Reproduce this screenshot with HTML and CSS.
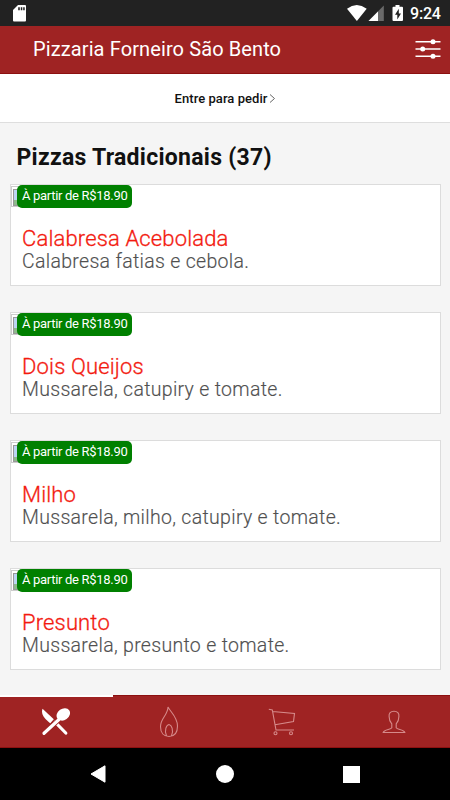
FILE: index.html
```html
<!DOCTYPE html>
<html lang="pt-BR">
<head>
<meta charset="utf-8">
<title>Pizzaria Forneiro São Bento</title>
<link rel="stylesheet" href="styles.css">
</head>
<body>
<div class="status">
  <svg class="sd" width="13" height="17" viewBox="0 0 13 17"><path d="M5 0h7a1 1 0 0 1 1 1v14.5a1 1 0 0 1-1 1H1a1 1 0 0 1-1-1V5z" fill="#fff"/><path d="M5.2 2.2h1.6v3H5.2zM7.8 2.2h1.5v3H7.800zM10.200 2.200h1.500v3h-1.500z" fill="#222"/></svg>
  <svg class="icons" width="58" height="18" viewBox="0 0 58 18"><path d="M0 3.700Q9.800-3.500 19.700 3.700L9.900 16z" fill="#fff"/><path d="M36.800.5V16H21.500z" fill="#6a6a6a"/><path d="M31 6.400V16h-9.500z" fill="#fff"/><path d="M48.500 0h4v1.700H55a1 1 0 0 1 1 1V15a1 1 0 0 1-1 1h-8.500a1 1 0 0 1-1-1V2.700a1 1 0 0 1 1-1h2z" fill="#fff"/><path d="M51.800 3.800 48 9.700h2.300v4.700l3.700-6h-2.200z" fill="#222"/></svg>
  <span class="time">9:24</span>
</div>
<header class="bar">
  <h1>Pizzaria Forneiro São Bento</h1>
  <svg width="26" height="20" viewBox="0 0 26 20" fill="#fff" stroke="#fff" stroke-width="1.600"><path d="M.5 2.700h25M.5 10h25M.5 17.300h25"/><circle cx="18" cy="2.700" r="1.700"/><circle cx="7.700" cy="10" r="1.700"/><circle cx="18" cy="17.300" r="1.700"/></svg>
</header>
<div class="login"><span>Entre para pedir</span><svg width="7" height="9" viewBox="0 0 7 9"><path d="M1 .5 5.500 4.500 1 8.500" fill="none" stroke="#666"/></svg></div>
<main>
  <h2>Pizzas Tradicionais (37)</h2>
  <article><i class="thumb"></i><span class="price">À partir de R$18.90</span><h3>Calabresa Acebolada</h3><p>Calabresa fatias e cebola.</p></article>
  <article><i class="thumb"></i><span class="price">À partir de R$18.90</span><h3>Dois Queijos</h3><p>Mussarela, catupiry e tomate.</p></article>
  <article><i class="thumb"></i><span class="price">À partir de R$18.90</span><h3>Milho</h3><p>Mussarela, milho, catupiry e tomate.</p></article>
  <article><i class="thumb"></i><span class="price">À partir de R$18.90</span><h3>Presunto</h3><p>Mussarela, presunto e tomate.</p></article>
</main>
<nav class="tabs">
  <div class="tab active"><svg width="30" height="28" viewBox="0 0 30 28"><path d="M14 14 24.800 25" stroke="#fff" stroke-width="3.200" stroke-linecap="round"/><path d="M1.500.8 12.800 11.300 9.300 15.300C4 11-.5 6.500 1.500.8z" fill="#fff"/><path d="M3 25.300 18 11.500" stroke="#9f2323" stroke-width="5"/><path d="M3 25.300 18 11.500" stroke="#fff" stroke-width="3.200" stroke-linecap="round"/><ellipse cx="22.300" cy="6.400" rx="7.200" ry="5.700" transform="rotate(-35 22.300 6.400)" fill="#fff"/></svg></div>
  <div class="tab"><svg width="20" height="32" viewBox="0 0 20 32"><path d="M9 1C9 9 1.500 12 1.500 20.500 1.500 27 5 30.500 10 30.500S18.500 27 18.500 20C18.500 11 11.500 6 9 1zM7.500 29.800C5 24 7.500 19 10 18.500 12.500 19 15 24 12.500 29.800"/></svg></div>
  <div class="tab"><svg width="28" height="28" viewBox="0 0 28 28"><path d="M.8 1.200 4.300 2 8 22h18M4.500 3.500 26.500 5.500 25.500 13.500 7 16.700"/><circle cx="7.500" cy="25.300" r="1.500"/><circle cx="23" cy="25.300" r="1.500"/></svg></div>
  <div class="tab"><svg width="24" height="24" viewBox="0 0 24 24"><path d="M12 1.200c-3.500 0-5.300 2.200-4.900 5.300 0 3.200 1 5.500 2.700 7.300v4c-1 2-7.600 1.600-8.600 4.700h21.600c-1-3.100-7.600-2.700-8.600-4.700v-4c1.700-1.800 2.700-4.100 2.700-7.300.4-3.100-1.400-5.300-4.900-5.300z"/></svg></div>
</nav>
<footer class="system">
  <svg width="16" height="18" viewBox="0 0 16 18"><path d="M15 .8v16.400L1 9z" fill="#fff" stroke="#fff" stroke-linejoin="round"/></svg>
  <i class="home"></i>
  <i class="recent"></i>
</footer>
</body>
</html>
```
FILE: styles.css
```css
* { box-sizing: border-box; }
body { margin: 0; width: 450px; height: 800px; display: flex; flex-direction: column; overflow: hidden; background: #f5f5f5; font-family: Roboto, sans-serif; }
h1, h2, h3, p { margin: 0; white-space: nowrap; }
svg { display: block; flex: none; }
.status { height: 26px; flex: none; display: flex; align-items: flex-start; padding: 5px 8px 0 13px; background: #222; color: #fff; }
.status .icons { margin-left: auto; }
.time { width: 32px; margin-left: 5px; font-size: 16px; font-weight: 500; line-height: 18px; letter-spacing: -.2px; }
.bar { height: 48px; flex: none; display: flex; align-items: center; justify-content: space-between; padding: 0 9px 2px 33px; background: #9f2323; border-bottom: 1px solid #8c1010; color: #fff; }
.bar h1 { font-size: 20px; font-weight: 400; line-height: 24px; letter-spacing: .11px; }
.login { height: 49px; flex: none; display: flex; align-items: center; justify-content: center; gap: 2px; padding-left: 1px; background: #fff; border-bottom: 1px solid #dedede; font-size: 13px; font-weight: 500; letter-spacing: .05px; color: #111; }
main { flex: 1; min-height: 0; padding: 0 9px 0 10px; }
h2 { height: 61px; padding: 20.500px 0 0 6.500px; font-size: 23px; line-height: 28px; font-weight: 700; letter-spacing: .27px; color: #111; }
article { position: relative; height: 102px; margin-bottom: 26px; padding: 42px 11px 0; background: #fff; border: 1px solid #dcdcdc; }
.thumb { position: absolute; left: 0; top: 1px; width: 19px; height: 21px; border: 1px solid #ccc; background: #fff; }
.thumb::before { content: ""; display: block; width: 14px; height: 15px; margin: 2px 0 0 1px; border: 1px solid #999; background: linear-gradient(#bcd5f2 70%, #8fb98d 70%); }
.price { position: absolute; left: 6px; top: 0; width: 115px; height: 23px; padding-left: 5px; border-radius: 5px; background: #008000; color: #fff; font-size: 13px; line-height: 21px; letter-spacing: -.31px; white-space: nowrap; }
h3 { font-size: 22px; line-height: 23px; font-weight: 300; letter-spacing: .15px; color: #f31a0f; -webkit-text-stroke: .3px #f31a0f; }
p { font-size: 19.500px; line-height: 23px; font-weight: 300; color: #505050; letter-spacing: .31px; -webkit-text-stroke: .15px #505050; }
.tabs { height: 53px; flex: none; display: grid; grid-template-columns: 113px 112px 113px 112px; background: #9f2323; border-bottom: 1px solid #8c1010; }
.tab { display: flex; align-items: center; justify-content: center; border-top: 1px solid #8c1010; fill: none; stroke: #d68a8a; stroke-width: 1.100; }
.tab.active { border-top: 2px solid #fff; padding-right: 1px; stroke: none; }
.system { height: 52px; flex: none; display: flex; align-items: center; justify-content: space-between; padding: 0 90px; background: #000; }
.home { width: 18px; height: 18px; border-radius: 50%; background: #fff; }
.recent { width: 17px; height: 17px; background: #fff; }
```
